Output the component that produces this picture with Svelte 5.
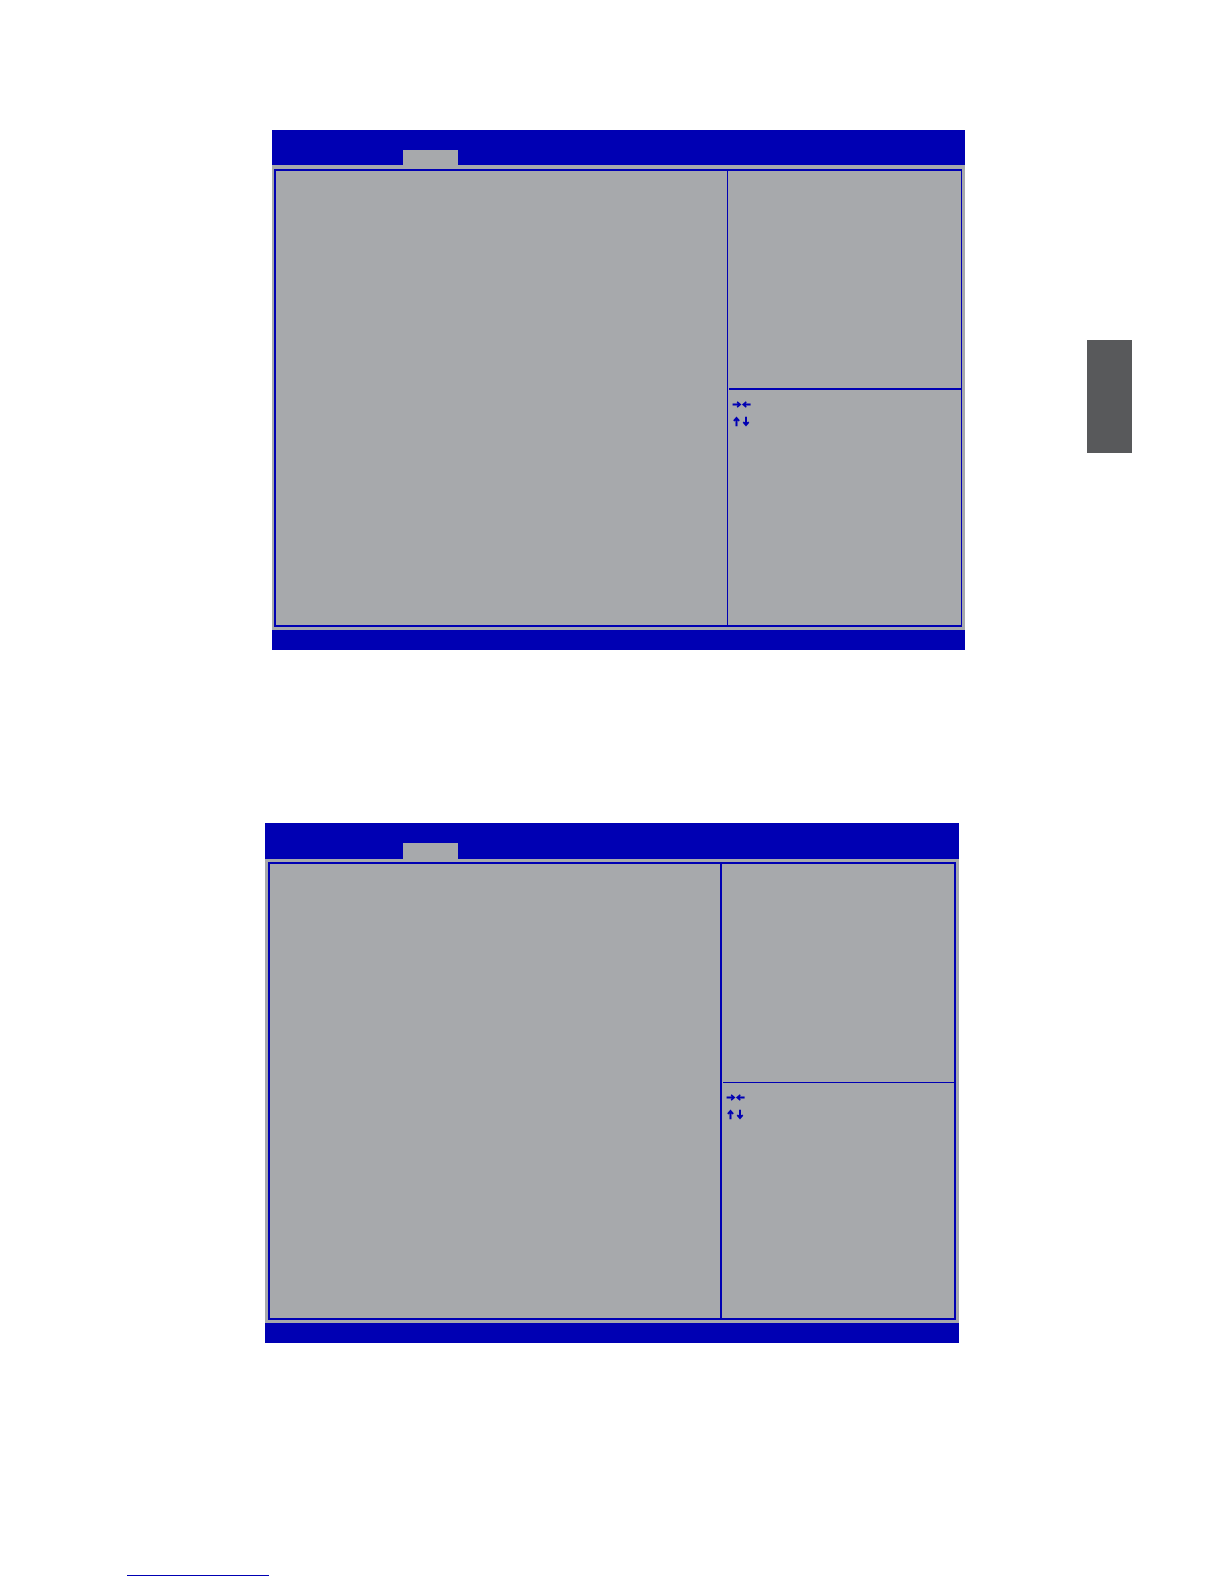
<script>
  const panels = [
    { id: 'first', label: 'Setup screen 1' },
    { id: 'second', label: 'Setup screen 2' }
  ];
</script>

<div class="page">
  <main>
    {#each panels as panel (panel.id)}
      <section class="screen {panel.id}" aria-label={panel.label}>
        <header>
          <button type="button" aria-label="Current tab"></button>
        </header>
        <div class="body">
          <div class="frame">
            <div class="options"></div>
            <aside>
              <div class="help"></div>
              <div class="keys">
                <svg width="20" height="29" viewBox="0 0 20 29" aria-hidden="true">
                  <path class="shaft" d="M.6 5.5H7M12 5.5H18.6M4.5 20V27.2M14 17.8V25" />
                  <path d="M9.5 5.5 5.6 2.2 4.7 3.2 6 5.5 4.7 7.8 5.6 8.8ZM9.9 5.5 13.8 2.2 14.7 3.2 13.4 5.5 14.7 7.8 13.8 8.8ZM4.5 17.4 1.2 21.3 2.2 22.4 4.5 21.2 6.8 22.4 7.8 21.3ZM14 27.6 10.7 23.7 11.7 22.6 14 23.8 16.3 22.6 17.3 23.7Z" />
                </svg>
              </div>
            </aside>
          </div>
        </div>
        <footer></footer>
      </section>
    {/each}
  </main>
  <div class="marker"></div>
  <a class="rule" href="#top" aria-label="Back to top"></a>
</div>

<style>
  :global(body) {
    margin: 0;
    background: #fff;
  }
  .page {
    --blue: #0000b3;
    --gray: #a7a9ac;
    display: grid;
    grid-template-columns: minmax(0, 1fr) 45px;
    column-gap: 122px;
    padding: 130px 92px 8px 127px;
    font-family: "Liberation Sans", sans-serif;
  }
  main {
    display: flex;
    flex-direction: column;
    gap: 173px;
    padding-left: 138px;
  }
  .screen {
    background: var(--gray);
  }
  .first {
    margin-left: 7px;
  }
  .second {
    margin-right: 6px;
  }
  header {
    display: flex;
    align-items: flex-end;
    height: 35px;
    padding-left: 131px;
    background: var(--blue);
  }
  .second header {
    height: 36px;
    padding-left: 138px;
  }
  button {
    width: 55px;
    height: 15px;
    padding: 0;
    border: 0;
    background: var(--gray);
  }
  .second button {
    height: 16px;
  }
  .body {
    padding: 4px 3px 3px 2px;
  }
  .second .body {
    padding: 3px;
  }
  .frame {
    display: grid;
    grid-template-columns: minmax(0, 1fr) 233px;
    min-height: 454px;
    border: 2px solid var(--blue);
  }
  .first .frame {
    border-right-width: 1px;
  }
  .second .frame {
    grid-template-columns: minmax(0, 1fr) 232px;
  }
  .options {
    border-right: 2px solid var(--blue);
  }
  .first .options {
    border-right-width: 1px;
  }
  aside {
    padding-left: 1px;
  }
  .help {
    height: 217px;
    border-bottom: 2px solid var(--blue);
  }
  .second .help {
    height: 218px;
    border-bottom-width: 1px;
  }
  .keys {
    padding: 9px 3px;
  }
  svg {
    display: block;
    fill: var(--blue);
  }
  .shaft {
    fill: none;
    stroke: var(--blue);
    stroke-width: 2;
  }
  footer {
    height: 20px;
    background: var(--blue);
  }
  .marker {
    height: 113px;
    margin-top: 210px;
    background: #58595b;
  }
  .rule {
    grid-column: 1;
    width: 142px;
    margin-top: 232px;
    border-bottom: 1px solid var(--blue);
  }
</style>
